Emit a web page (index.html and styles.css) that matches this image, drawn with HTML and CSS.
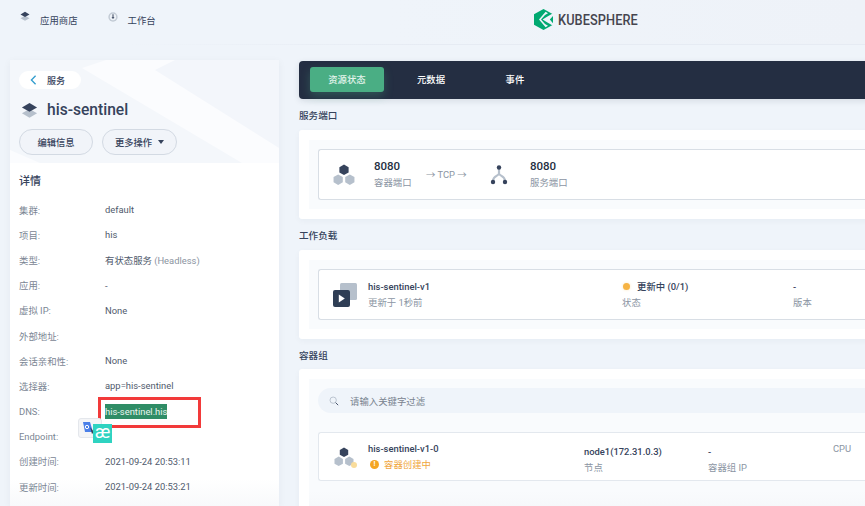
FILE: index.html
```html
<!DOCTYPE html>
<html lang="zh">
<head>
<meta charset="utf-8">
<title>his-sentinel</title>
<link rel="stylesheet" href="styles.css">
</head>
<body>
<header class="topbar">
  <nav class="topnav">
    <a class="topnav-item"><svg class="topnav-icon" viewBox="0 0 12 12"><path d="M6 4.8 1.5 7.2 6 9.8l4.5-2.6z" fill="#b6c0cc"/><path d="M6 .8 1.5 3.4 6 6l4.5-2.6z" fill="#36435c"/></svg><span>应用商店</span></a>
    <a class="topnav-item"><svg class="topnav-icon topnav-icon-sm" viewBox="0 0 12 12"><circle cx="6" cy="6" r="5.6" fill="#c3cbd5"/><circle cx="6" cy="6" r="3.8" fill="#eef2f7"/><path d="M5.4 2.6h1.2v3.6h1.2L6 8.4 4.2 6.2h1.2z" fill="#36435c"/></svg><span>工作台</span></a>
  </nav>
  <div class="brand">
    <svg class="brand-mark" viewBox="0 0 19 21"><path d="M9.5 0 19 5.2v10.6L9.5 21 0 15.8V5.2z" fill="#00a971"/><path d="M19 4.2 12.6 8 8.6 10.5l4 2.5 6.4 3.8v-2.6l-3.2-3.7L19 7z" fill="#eef3fa"/><path d="M7 10.5 11 6 14 4.2 11.6 2.8 5 10.5l6.6 7.7 2.4-1.4L11 15z" fill="#eef3fa"/></svg>
    <span class="brand-name">KUBESPHERE</span>
  </div>
</header>

<div class="page">
  <aside class="side">
    <div class="side-head">
      <svg class="side-deco" viewBox="0 0 269 103" preserveAspectRatio="none"><path d="M72 8 96 0H269V103H232z" fill="#fbfcfe"/><path d="M145 10 269 88V0H165z" fill="#f3f6fb"/><path d="M0 90 30 103H0z" fill="#fbfcfe"/></svg>
      <a class="back"><svg class="back-icon" viewBox="0 0 8 12"><path d="M6.5 1 1.5 6l5 5" fill="none" stroke="#329dce" stroke-width="1.6"/></svg><span>服务</span></a>
      <div class="title-row">
        <svg class="title-icon" viewBox="0 0 18 18"><path d="M9 7.5 1 12l8 4.6 8-4.6z" fill="#b6c0cc"/><path d="M9 1 1 5.8l8 4.6 8-4.6z" fill="#36435c"/></svg>
        <h1 class="title">his-sentinel</h1>
      </div>
      <div class="actions">
        <button class="btn btn-edit">编辑信息</button>
        <button class="btn btn-more">更多操作<span class="caret"></span></button>
      </div>
    </div>
    <div class="side-body">
      <h2 class="detail-title">详情</h2>
      <dl class="details">
        <div class="row"><dt>集群:</dt><dd>default</dd></div>
        <div class="row"><dt>项目:</dt><dd>his</dd></div>
        <div class="row"><dt>类型:</dt><dd>有状态服务 <span class="muted">(Headless)</span></dd></div>
        <div class="row"><dt>应用:</dt><dd>-</dd></div>
        <div class="row"><dt>虚拟 IP:</dt><dd>None</dd></div>
        <div class="row"><dt>外部地址:</dt><dd></dd></div>
        <div class="row"><dt>会话亲和性:</dt><dd>None</dd></div>
        <div class="row"><dt>选择器:</dt><dd>app=his-sentinel</dd></div>
        <div class="row"><dt>DNS:</dt><dd><span class="selected">his-sentinel.his</span></dd></div>
        <div class="row"><dt>Endpoint:</dt><dd></dd></div>
        <div class="row"><dt>创建时间:</dt><dd>2021-09-24 20:53:11</dd></div>
        <div class="row"><dt>更新时间:</dt><dd>2021-09-24 20:53:21</dd></div>
      </dl>
    </div>
    <div class="red-box"></div>
    <div class="tr-icons">
      <div class="tr-google"><svg viewBox="0 0 14 14"><path d="M1 1h7l3 10H3z" fill="#4a7fe8"/><path d="M8 6l4 5-2 2z" fill="#36435c"/><circle cx="5" cy="6" r="1.7" fill="none" stroke="#fff"/></svg></div>
      <div class="tr-ae">æ</div>
    </div>
  </aside>

  <main class="main">
    <nav class="tabs">
      <a class="tab tab-active">资源状态</a>
      <a class="tab">元数据</a>
      <a class="tab">事件</a>
    </nav>

    <h3 class="sec-title">服务端口</h3>
    <section class="card"><div class="inner">
      <div class="item item-port">
        <svg class="ic" viewBox="1 1 20 20"><path d="M11 1.5l4.2 2.4v4.8L11 11.1 6.8 8.7V3.9z" fill="#36435c"/><path d="M5.7 10.5l4.2 2.4v4.8l-4.2 2.4-4.2-2.4v-4.8z" fill="#b6c0cc"/><path d="M16.3 10.5l4.2 2.4v4.8l-4.2 2.4-4.2-2.4v-4.8z" fill="#b6c0cc"/></svg>
        <div class="stack"><b class="num">8080</b><span class="sub">容器端口</span></div>
        <span class="proto">→ TCP →</span>
        <svg class="ic" viewBox="0 0 22 22"><path d="M11 4v5.5c0 2.5-6 2-6 7.5M11 9.5c0 2.5 6 2 6 7.5" fill="none" stroke="#b6c0cc" stroke-width="2.2"/><circle cx="11" cy="3.5" r="2.2" fill="#36435c"/><circle cx="5" cy="18" r="2.2" fill="#36435c"/><circle cx="17" cy="18" r="2.2" fill="#36435c"/></svg>
        <div class="stack"><b class="num">8080</b><span class="sub">服务端口</span></div>
      </div>
    </div></section>

    <h3 class="sec-title">工作负载</h3>
    <section class="card"><div class="inner">
      <div class="item item-load">
        <svg class="ic-load" viewBox="0 0 24 24"><rect x="7" y="0" width="17" height="17" rx="1.5" fill="#b6c0cc"/><rect y="7" width="17" height="17" rx="2" fill="#2f3e55"/><path d="M5.8 11.5l6 4-6 4z" fill="#fff"/></svg>
        <div class="stack"><b class="name">his-sentinel-v1</b><span class="sub">更新于 1秒前</span></div>
        <div class="stack"><b class="name status"><i class="dot"></i>更新中 (0/1)</b><span class="sub">状态</span></div>
        <div class="stack"><b class="name">-</b><span class="sub">版本</span></div>
      </div>
    </div></section>

    <h3 class="sec-title sec-title-tight">容器组</h3>
    <section class="card card-last"><div class="inner inner-last">
      <div class="search"><svg class="search-icon" viewBox="0 0 12 12"><circle cx="5" cy="5" r="3.8" fill="none" stroke="#b6c0cc" stroke-width="1.1"/><path d="M8 8l3 3" stroke="#36435c" stroke-width="1.1"/></svg><span>请输入关键字过滤</span></div>
      <div class="item item-pod">
        <div class="pod-ic">
          <svg class="ic" viewBox="0 0 22 22"><path d="M11 1.5l4.2 2.4v4.8L11 11.1 6.8 8.7V3.9z" fill="#36435c"/><path d="M5.7 10.5l4.2 2.4v4.8l-4.2 2.4-4.2-2.4v-4.8z" fill="#b6c0cc"/><path d="M16.3 10.5l4.2 2.4v4.8l-4.2 2.4-4.2-2.4v-4.8z" fill="#b6c0cc"/></svg>
          <i class="pod-badge"></i>
        </div>
        <div class="stack pod-name"><b class="name">his-sentinel-v1-0</b><span class="warn"><i class="warn-ic">!</i>容器创建中</span></div>
        <div class="stack pod-node"><b class="name">node1(172.31.0.3)</b><span class="sub">节点</span></div>
        <div class="stack pod-ip"><b class="name">-</b><span class="sub">容器组 IP</span></div>
        <span class="cpu">CPU</span>
      </div>
    </div></section>
  </main>
</div>
</body>
</html>
```

FILE: styles.css
```css
* { box-sizing: border-box; }
html, body { height: 100%; }
body {
  margin: 0;
  width: 865px;
  height: 506px;
  overflow: hidden;
  background: #eff4fa;
  color: #36435c;
  font-family: Roboto, "Noto Sans CJK SC", sans-serif;
  font-size: 9.4px;
}
.topbar {
  position: relative;
  display: flex;
  align-items: center;
  height: 45px;
  padding: 0 0 5px 19px;
  background: linear-gradient(90deg, #eff4fa 45%, #eef2f8 100%);
  border-bottom: 1px solid;
  border-image: linear-gradient(90deg, #eff4fa 15%, #e6ebf3 50%) 1;
}
.topnav { display: flex; gap: 29px; width: 515px; }
.topnav-item { display: flex; align-items: center; gap: 9px; color: #36435c; }
.topnav-icon { width: 12px; height: 12px; margin-top: -6px; }
.topnav-icon-sm { width: 10px; height: 10px; margin-left: 1px; margin-right: 1px; }
.brand { display: flex; align-items: center; gap: 5px; }
.brand-mark { width: 19px; height: 21px; }
.brand-name { font-size: 15.2px; font-weight: 500; color: #45454f; transform-origin: left; transform: scaleX(.84); letter-spacing: .1px; }

.page { display: flex; gap: 20px; height: 461px; padding: 15px 0 0 10px; overflow: hidden; }

.side {
  position: relative;
  flex: 0 0 269px;
  height: 446px;
  background: #fff;
  box-shadow: 0 2px 8px rgba(36, 46, 66, .05);
}
.side-head {
  position: relative;
  height: 103px;
  padding: 11px 9px 0;
  background: #f4f7fb;
}
.side-deco { position: absolute; inset: 0; width: 100%; height: 100%; }
.back, .title-row, .actions { position: relative; }
.back {
  display: flex;
  align-items: center;
  gap: 10px;
  width: 62px;
  height: 18px;
  padding-left: 11px;
  border-radius: 9px;
  background: #fff;
  font-weight: 500;
  font-size: 9px;
}
.back-icon { width: 7px; height: 10px; }
.title-row { display: flex; align-items: center; gap: 9px; margin-top: 11px; height: 20px; padding-left: 2px; }
.title-icon { width: 17px; height: 17px; }
.title { margin: 0; font-size: 15.6px; font-weight: 500; line-height: 20px; color: #36435c; }
.actions { display: flex; gap: 9px; margin-top: 9px; }
.btn {
  height: 26px;
  border: 1px solid #d3dae3;
  border-radius: 13px;
  background: #f1f4f9;
  color: #36435c;
  font: 500 9.3px Roboto, "Noto Sans CJK SC", sans-serif;
  padding: 0;
}
.btn-edit { width: 74px; }
.btn-more { width: 75px; display: flex; align-items: center; justify-content: center; gap: 6px; }
.caret { border: 3.5px solid transparent; border-top: 4px solid #36435c; border-bottom: 0; }

.side-body { height: 343px; padding: 11px 9px 0; background: linear-gradient(#fff 92%, #f8f9fb); }
.detail-title { margin: 0 0 8px; font-size: 11px; font-weight: 500; line-height: 15px; color: #36435c; }
.details { margin: 0; }
.row { display: grid; grid-template-columns: 86px 1fr; align-items: center; height: 25.2px; }
dt { color: #7b8694; }
dd { margin: 0; color: #4f5a6c; }
.muted { color: #8a93a0; }
.selected { display: inline-block; background: #2f8d66; color: #e9f5ef; line-height: 15px; padding: 0; }

.red-box {
  position: absolute;
  left: 88px;
  top: 337px;
  width: 103px;
  height: 31px;
  border: 3px solid #f23a3a;
}
.tr-icons { position: absolute; left: 68px; top: 358px; width: 36px; height: 26px; }
.tr-google {
  position: absolute;
  left: 0;
  top: 0;
  width: 24px;
  height: 20px;
  padding: 2px 3px;
  border-radius: 3px;
  background: #f4f5f7;
  border: 1px solid #e4e7ec;
}
.tr-google svg { display: block; width: 14px; height: 14px; }
.tr-ae {
  position: absolute;
  left: 15px;
  top: 6px;
  width: 19px;
  height: 19px;
  background: #2fd3c1;
  color: #fff;
  font-size: 18px;
  line-height: 16px;
  text-align: center;
}

.main { flex: 0 0 620px; }
.tabs {
  display: flex;
  gap: 10px;
  height: 38px;
  margin-top: 1px;
  padding: 6px 11px;
  border-radius: 4px 0 0 4px;
  background: #242e42;
  box-shadow: 0 2px 6px rgba(36, 46, 66, .12);
}
.tab { width: 74px; height: 25px; border-radius: 3px; color: #fff; line-height: 25px; text-align: center; font-weight: 500; }
.tab-active { background: #4aae84; color: #e5f5ed; box-shadow: 0 4px 10px rgba(74, 174, 132, .3); }
.sec-title { margin: 10px 0 7px; font-size: 9.6px; line-height: 14px; font-weight: 500; color: #36435c; }
.sec-title-tight { margin-bottom: 6px; }
.card { padding: 10px 0 10px 10px; background: #fff; border-radius: 3px; box-shadow: 0 2px 6px rgba(36, 46, 66, .04); }
.inner { padding: 9px 0 9px 9px; background: #f9fbfd; }
.item {
  display: flex;
  align-items: center;
  height: 51px;
  background: #fff;
  border: 1px solid #d8dee5;
  border-right: 0;
  border-radius: 3px 0 0 3px;
}
.ic { width: 22px; height: 22px; display: block; }
.stack { display: flex; flex-direction: column; gap: 3px; }
.sub { color: #8b95a3; line-height: 13px; }
.num { font-size: 11.5px; line-height: 14px; font-weight: 500; color: #242e42; margin-top: -2px; }
.name { font-size: 9.4px; line-height: 13px; font-weight: 500; color: #36435c; }
.proto { color: #8b95a3; white-space: nowrap; margin-top: -1px; }
.item-port { padding-left: 14px; }
.item-port .stack { width: 52px; }
.item-port .stack:nth-of-type(1) { margin-left: 19px; }
.item-port .proto { margin-right: 18px; width: 44px; }
.item-port .stack:last-child { margin-left: 20px; }
.ic-load { width: 24px; height: 24px; margin: 0 11px 0 14px; flex: none; }
.item-load .stack:nth-of-type(1) { width: 254px; }
.item-load .stack:nth-of-type(2) { width: 171px; }
.status { display: flex; align-items: center; gap: 7px; margin-left: 1px; }
.dot { width: 7px; height: 7px; border-radius: 50%; background: #f5a623; opacity: .85; box-shadow: 0 0 3px #fbe4b5; }
.card-last { padding-bottom: 0; }
.inner-last { height: 160px; padding-top: 9px; background: linear-gradient(#f9fbfd 70%, #f0f2f5); }
.search {
  display: flex;
  align-items: center;
  gap: 11px;
  height: 25px;
  margin-bottom: 19px;
  padding-left: 11px;
  border-radius: 13px 0 0 13px;
  background: #eff4fa;
  color: #79838f;
}
.search-icon { width: 10px; height: 10px; }
.item-pod { height: 49px; border-color: #e3e8ee; }
.pod-ic { position: relative; margin: 0 13px 0 14px; flex: none; }
.pod-badge { position: absolute; right: -2px; bottom: 0; width: 6px; height: 6px; border-radius: 50%; background: #f9dc9b; }
.warn { display: flex; align-items: center; gap: 5px; color: #f0a63c; line-height: 13px; margin-left: 2px; }
.warn-ic { width: 9px; height: 9px; border-radius: 50%; background: #f5a623; color: #fff; font: 700 7px/9px Roboto, sans-serif; text-align: center; }
.pod-name { width: 216px; }
.pod-node { width: 124px; padding-top: 5px; }
.pod-ip { width: 125px; padding-top: 5px; }
.cpu { color: #8b95a3; margin-bottom: 16px; }
```
